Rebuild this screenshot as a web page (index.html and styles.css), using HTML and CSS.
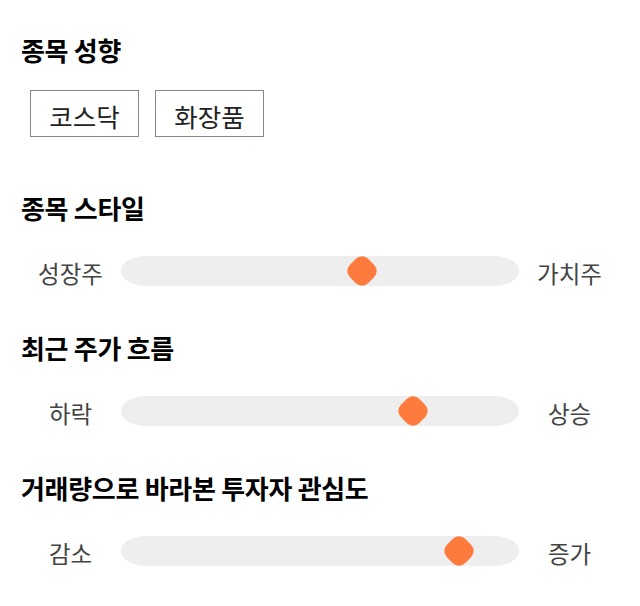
FILE: index.html
```html
<!doctype html>
<html>
  <head>
    <meta charset="utf-8">
    <link rel="stylesheet" href="styles.css">
  </head>

  <body>
    <main>
      <section class="group group-tags">
        <h2>종목 성향</h2>
        <div class="tags">
          <span class="tag">코스닥</span>
          <span class="tag">화장품</span>
        </div>
      </section>

      <section class="group">
        <h2>종목 스타일</h2>
        <div class="scale">
          <span class="scale-label">성장주</span>
          <div class="track">
            <span class="thumb" style="left: 60.5%"></span>
          </div>
          <span class="scale-label">가치주</span>
        </div>
      </section>

      <section class="group">
        <h2>최근 주가 흐름</h2>
        <div class="scale">
          <span class="scale-label">하락</span>
          <div class="track">
            <span class="thumb" style="left: 73.4%"></span>
          </div>
          <span class="scale-label">상승</span>
        </div>
      </section>

      <section class="group">
        <h2>거래량으로 바라본 투자자 관심도</h2>
        <div class="scale">
          <span class="scale-label">감소</span>
          <div class="track">
            <span class="thumb" style="left: 84.9%"></span>
          </div>
          <span class="scale-label">증가</span>
        </div>
      </section>
    </main>
  </body>
</html>
```

FILE: styles.css
```css
/* Reset */
*,
*::before,
*::after {
  box-sizing: border-box;
  margin: 0;
  padding: 0;
}

body {
  font-family: "Noto Sans CJK KR", "Noto Sans", sans-serif;
  color: #000;
  background-color: #fff;
}

main {
  padding: 35px 20px 0;
}

h2 {
  font-size: 26px;
  font-weight: 700;
  line-height: 30px;
  height: 30px;
  padding-left: 1px;
  letter-spacing: -0.3px;
}

.group + .group {
  margin-top: 47px;
}

.group-tags + .group {
  margin-top: 56px;
}

.tags {
  display: flex;
  gap: 16px;
  margin-top: 25px;
  padding-left: 10px;
}

.tag {
  display: flex;
  align-items: center;
  justify-content: center;
  width: 109px;
  height: 47px;
  border: 1px solid #888;
  font-size: 25.5px;
  line-height: 30px;
  color: #222;
  padding-top: 4px;
}

.scale {
  display: flex;
  align-items: center;
  height: 30px;
  margin-top: 33px;
}

.scale-label {
  width: 101px;
  text-align: center;
  font-size: 23.5px;
  line-height: 30px;
  color: #444;
  padding-top: 4px;
}

.track {
  position: relative;
  flex: 1;
  height: 30px;
  background-color: #eee;
  border-radius: 24px / 15px;
}

.thumb {
  position: absolute;
  top: 50%;
  width: 26px;
  height: 26px;
  background-color: #ff7a3d;
  border-radius: 9px;
  transform: translate(-50%, -50%) rotate(45deg);
}
```
